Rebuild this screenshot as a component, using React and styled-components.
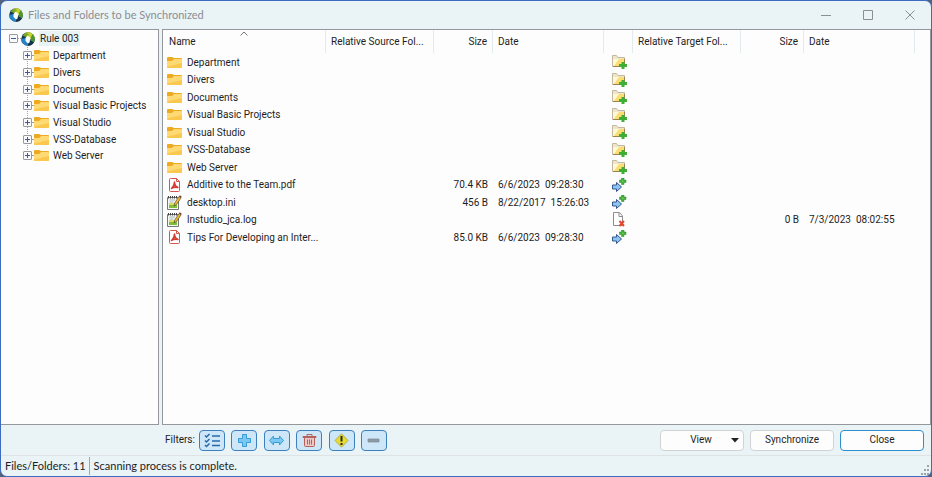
import React from "react";
import styled, { createGlobalStyle } from "styled-components";

const GlobalStyle = createGlobalStyle`
  * { box-sizing: border-box; }
  html, body, #root { height: 100%; margin: 0; }
  body { background: #53617a; color: #1d1d24; font: 10px/16px Roboto, "Liberation Sans", sans-serif; }
  button { font: inherit; color: inherit; margin: 0; padding: 0; }
  ul { list-style: none; margin: 0; padding: 0; }
`;

const Window = styled.div`
  display: flex;
  flex-direction: column;
  min-height: 100%;
  border: 1px solid #3a6cc0;
  border-radius: 7px;
  background: #eaf3f6;
  overflow: hidden;
`;

const TitleBar = styled.header`
  display: flex;
  align-items: center;
  height: 28px;
  padding-left: 8px;
`;

const Title = styled.h1`
  flex: 1;
  margin: 0 0 0 5px;
  color: #8b8e92;
  font: 11px/16px Lato, "Open Sans", sans-serif;
`;

const CaptionButton = styled.button`
  display: grid;
  place-items: center;
  width: 42px;
  height: 26px;
  border: 0;
  background: transparent;
`;

const Panels = styled.main`
  flex: 1;
  display: grid;
  grid-template-columns: 158px 1fr;
  gap: 3px;
`;

const Panel = styled.section`
  min-width: 0;
  border: 1px solid #94989d;
  background: #fdfdfd;
  overflow: hidden;
`;

const TreePanel = styled(Panel)`
  border-left-width: 0;
  padding: 0 0 0 8px;
`;

const TreeRow = styled.div`
  display: flex;
  align-items: center;
  height: 17px;
  white-space: nowrap;
`;

const Expander = styled.button`
  display: grid;
  place-items: center;
  flex: none;
  width: 9px;
  height: 9px;
  border: 1px solid #989ca2;
  border-radius: 1px;
  background: #f9f9fa;
`;

const Stub = styled.span`
  width: 2px;
  border-top: 1px dotted #9b9b9b;
`;

const TreeLabel = styled.span`
  margin-left: 3px;
  padding: 0 1px;
  line-height: 15px;
  background: ${(p) => (p.$selected ? "#e7f3f5" : "transparent")};
`;

const RootRow = styled(TreeRow)`
  ${TreeLabel} { margin-left: 4px; }
  ${Stub} { width: 3px; }
`;

const Branch = styled.ul`
  margin-left: 14px;
  background: linear-gradient(#a4a4a4 50%, transparent 50%) 4px 0 / 1px 2px repeat-y;
  max-height: 110px;

  li:nth-child(3n) ${TreeRow} { height: 16px; }
`;

const Grid = styled.table`
  width: 100%;
  table-layout: fixed;
  border-collapse: separate;
  border-spacing: 0;
  font-size: 10px;

  tbody tr:nth-child(odd) { height: 18px; }
  tbody tr:nth-child(even) { height: 17px; }
`;

const Col = styled.col`
  width: ${(p) => (p.$w ? `${p.$w}px` : "auto")};
`;

const HeadCell = styled.th`
  height: 23px;
  padding: 1px 5px 0;
  border-right: ${(p) => (p.$last ? "0" : "1px solid #e2ecee")};
  font-weight: 400;
  text-align: ${(p) => p.$align || "left"};
  white-space: nowrap;
`;

const SortHead = styled.div`
  position: relative;
  padding-left: 1px;

  svg { position: absolute; left: 50%; top: -3px; margin-left: -4px; }
`;

const Cell = styled.td`
  height: inherit;
  padding: 0 5px;
  line-height: 17px;
  text-align: ${(p) => p.$align || "left"};
  white-space: pre;
`;

const NameCell = styled(Cell)`
  padding: 0 4px;
`;

const FileName = styled.div`
  display: flex;
  align-items: center;
  gap: 5px;
  height: 17px;
`;

const IconCell = styled(Cell)`
  padding: 0 0 0 8px;

  svg { display: block; }
`;

const FilterBar = styled.div`
  display: flex;
  align-items: center;
  justify-content: space-between;
  height: 31px;
  padding: 0 7px 0 164px;
  border-bottom: 1px solid #dfe3e4;
`;

const Filters = styled.div`
  display: flex;
  align-items: center;
  gap: 6px;
`;

const FilterLabel = styled.span`
  width: 28px;
`;

const FilterSet = styled.div`
  display: flex;
  justify-content: space-between;
  width: 188px;
`;

const FilterButton = styled.button`
  display: grid;
  place-items: center;
  width: 26px;
  height: 21px;
  border: 1px solid #3c81bd;
  border-radius: 4px;
  background: #cde6f8;
`;

const Actions = styled.div`
  display: flex;
  gap: 6px;
`;

const ActionButton = styled.button`
  display: flex;
  align-items: center;
  justify-content: center;
  width: 84px;
  height: 21px;
  border: 1px solid ${(p) => (p.$primary ? "#2d8fd0" : "#d0d3d4")};
  border-radius: 4px;
  background: #fdfdfd;
`;

const DropButton = styled(ActionButton)`
  padding: 0 4px 0 10px;

  span { flex: 1; }
`;

const StatusBar = styled.footer`
  display: flex;
  align-items: center;
  height: 20px;
  padding-left: 4px;
  font: 11px/16px Lato, "Open Sans", sans-serif;
`;

const StatusPart = styled.span`
  line-height: 18px;
`;

const StatusMessage = styled(StatusPart)`
  flex: 1;
  margin-left: 3px;
  padding-left: 4px;
  border-left: 1px solid #a2a7a9;
`;

const Grip = styled.svg`
  align-self: flex-end;
  margin: 0 1px 1px 0;
`;

function AppIcon() {
  return (
    <svg width="14" height="14" viewBox="0 0 14 14" aria-hidden="true">
      <circle cx="7" cy="7" r="6.800" fill="#173a50" />
      <path d="M4.500.8A6.800 6.800 0 0 1 13.800 7l-3.800.5L6 4 3 2.500z" fill="#c3d52a" />
      <path d="M1.500 3.500 5 .8l3 1.500-2.500 3z" fill="#7aa82a" />
      <path d="M11.500 2.300a6.800 6.800 0 0 1 1 8.700L9.500 8.500 10 5z" fill="#4d9434" />
      <path d="M.2 7a6.800 6.800 0 0 0 6.800 6.800V10L4.500 6z" fill="#2585c8" />
      <path d="M7 13.800a6.800 6.800 0 0 0 6-3.600L9.500 8.500 7 10z" fill="#15364e" />
      <path d="m6.500 3.500 3 2.500-1 4.500-1.500 1L4.500 9V6z" fill="#fbfdfc" />
    </svg>
  );
}

function FolderIcon() {
  return (
    <svg width="15" height="13" viewBox="0 0 15 13" aria-hidden="true">
      <path d="M0 2q0-1 1-1h4l2 1h7q1 0 1 1v3H0z" fill="#eda91f" />
      <path d="M0 5h5l2-2h7q1 0 1 1v7q0 1-1 1H1q-1 0-1-1z" fill="#ffd974" />
      <path d="M0 10.500 15 7v4q0 1-1 1H1q-1 0-1-1z" fill="#fac84e" />
    </svg>
  );
}

function PdfIcon() {
  return (
    <svg width="15" height="14" viewBox="0 0 15 14" aria-hidden="true">
      <path d="M3.500.5h6l3 3v9q0 1-1 1h-8q-1 0-1-1v-11q0-1 1-1z" fill="#fff" stroke="#d9534b" />
      <path d="M9.500.5v3h3" fill="none" stroke="#d9534b" />
      <path d="M4.500 10.500q3-2.500 3-6.500 0 4 3.500 5.500-4-.8-6.500 1z" fill="#e8827b" stroke="#d5382f" strokeWidth="1.500" strokeLinejoin="round" />
    </svg>
  );
}

function NoteIcon() {
  return (
    <svg width="15" height="15" viewBox="0 0 15 15" aria-hidden="true">
      <path d="M.5 2.500h11v12H.5z" fill="#f6f8f6" stroke="#71777a" />
      <path d="M2 9.500h8V13H2z" fill="#7fbe36" />
      <path d="M2 8h7v2H2z" fill="#d6df5c" />
      <path d="M2.500 5h5.500M2.500 7h4" stroke="#a8b5bb" />
      <path d="M1.500 1v2.500M3.500 1v2.500M5.500 1v2.500M7.500 1v2.500M9.500 1v2.500" stroke="#444" />
      <path d="m7 11 .7-3L12 1.500l2 1.500-4.500 6.500z" fill="#f3b92e" stroke="#3c3a31" strokeWidth=".6" />
      <path d="m12 1.500.8-1.200 2 1.500L14 3z" fill="#7d3c35" />
    </svg>
  );
}

function FolderAddIcon() {
  return (
    <svg width="15" height="14" viewBox="0 0 15 14" aria-hidden="true">
      <path d="M.5 2V.5h4l1.500 2h6.500v9H.5z" fill="#eee6cc" stroke="#c3b89d" />
      <path d="M2 4h10v7H1z" fill="#f9df72" />
      <path d="M1 4h6l-5 7H1z" fill="#fff7d5" />
      <path d="M1 11.500h9M12.500 4v5" stroke="#9c8253" />
      <path d="M9.500 7h3v2H15v3h-2.500v2h-3v-2H7V9h2.500z" fill="#3fae35" />
    </svg>
  );
}

function CopyIcon() {
  return (
    <svg width="15" height="14" viewBox="0 0 15 14" aria-hidden="true">
      <path d="M.5 7h4V4.500L9.500 9l-5 4.500V11h-4z" fill="#8cc5f0" stroke="#34578f" strokeLinejoin="round" />
      <path d="M9.500 0h2.500v2h2v2.500h-2v2H9.500v-2h-2V2h2z" fill="#44b23a" stroke="#268b2d" strokeWidth=".5" />
      <path d="M10 3.300h1.500" stroke="#82d470" />
    </svg>
  );
}

function DeleteFileIcon() {
  return (
    <svg width="15" height="15" viewBox="0 0 15 15" aria-hidden="true">
      <path d="M1.500.5h6l3 3.500v9.500h-9z" fill="#fff" stroke="#8c8c8c" />
      <path d="M7 1v3.500h3.500" fill="none" stroke="#8c8c8c" />
      <path d="m7.500 9 4.500 5m0-5-4.500 5" stroke="#e04630" strokeWidth="2" />
    </svg>
  );
}

const MARKS = {
  folder: FolderAddIcon,
  copy: CopyIcon,
  remove: DeleteFileIcon,
};
const KINDS = { folder: FolderIcon, pdf: PdfIcon, note: NoteIcon };

const FOLDERS = ["Department", "Divers", "Documents", "Visual Basic Projects", "Visual Studio", "VSS-Database", "Web Server"];
const ROWS = [
  ...FOLDERS.map((name) => ({ name, kind: "folder", mark: "folder" })),
  { name: "Additive to the Team.pdf", kind: "pdf", size: "70.4 KB", date: "6/6/2023  09:28:30", mark: "copy" },
  { name: "desktop.ini", kind: "note", size: "456 B", date: "8/22/2017  15:26:03", mark: "copy" },
  { name: "lnstudio_jca.log", kind: "note", mark: "remove", targetSize: "0 B", targetDate: "7/3/2023  08:02:55" },
  { name: "Tips For Developing an Inter...", kind: "pdf", size: "85.0 KB", date: "6/6/2023  09:28:30", mark: "copy" },
];
const COLUMNS = [163, 108, 59, 111, 29, 108, 63, 111, null];

const FILTERS = [
  {
    label: "Show all",
    art: (
      <path
        d="m1 2.500 1.500 1.500 3-3M1 7.500 2.500 9l3-3M1 12l1.500 1.500 3-3M8 3h8M8 8h8M8 12.500h8"
        fill="none"
        stroke="#2869aa"
        strokeWidth="1.500"
      />
    ),
  },
  {
    label: "New items",
    art: <path d="M6.500 1.500h4v4h4v4h-4v4h-4v-4h-4v-4h4z" fill="#7ac8f2" stroke="#379cd5" strokeLinejoin="round" />,
  },
  {
    label: "Changed items",
    art: <path d="m1.500 7.500 4-4.500v2.500h6V3l4 4.500-4 4.500V9.500h-6V12z" fill="#7ac8f2" stroke="#379cd5" strokeLinejoin="round" />,
  },
  {
    label: "Deleted items",
    art: (
      <g fill="none" stroke="#b5625c">
        <path d="M3.500 5v7.500q0 1 1 1h8q1 0 1-1V5" fill="#edc8c4" />
        <path d="M2 3.500h13v1H2zM6 3V1.500h5V3M6.500 6.500v5M8.500 6.500v5M10.500 6.500v5" />
      </g>
    ),
  },
  {
    label: "Conflicts",
    art: (
      <g>
        <path d="m8.500.8 6.500 6.700-6.500 6.700L2 7.500z" fill="#e6dc32" stroke="#b9ad3c" />
        <path d="M8.500 3v5.500M8.500 10v2" stroke="#26281f" strokeWidth="2" />
      </g>
    ),
  },
  { label: "Unchanged items", art: <path d="M3 6h11v3H3z" fill="#8e9aa5" stroke="#7b8995" strokeWidth=".7" /> },
];

function Toggle({ open = false, label }) {
  return (
    <Expander aria-label={label} aria-expanded={open}>
      <svg width="7" height="7" viewBox="0 0 7 7" aria-hidden="true">
        <path d={open ? "M1 3.500h5" : "M1 3.500h5M3.500 1v5"} stroke="#42589a" />
      </svg>
    </Expander>
  );
}

function FolderTree() {
  return (
    <TreePanel aria-label="Rules">
      <ul>
        <li>
          <RootRow>
            <Toggle open label="Collapse Rule 003" />
            <Stub />
            <AppIcon />
            <TreeLabel $selected>Rule 003</TreeLabel>
          </RootRow>
          <Branch>
            {FOLDERS.map((name) => (
              <li key={name}>
                <TreeRow>
                  <Toggle label={`Expand ${name}`} />
                  <Stub />
                  <FolderIcon />
                  <TreeLabel>{name}</TreeLabel>
                </TreeRow>
              </li>
            ))}
          </Branch>
        </li>
      </ul>
    </TreePanel>
  );
}

function FileTable() {
  return (
    <Panel aria-label="Files">
      <Grid>
        <colgroup>
          {COLUMNS.map((w, i) => (
            <Col key={i} $w={w} />
          ))}
        </colgroup>
        <thead>
          <tr>
            <HeadCell aria-sort="ascending">
              <SortHead>
                Name
                <svg width="8" height="5" viewBox="0 0 8 5" aria-hidden="true">
                  <path d="m.5 4.500 3.500-3.500 3.500 3.500" fill="none" stroke="#70777a" />
                </svg>
              </SortHead>
            </HeadCell>
            <HeadCell>Relative Source Fol...</HeadCell>
            <HeadCell $align="right">Size</HeadCell>
            <HeadCell>Date</HeadCell>
            <HeadCell aria-label="Action" />
            <HeadCell>Relative Target Fol...</HeadCell>
            <HeadCell $align="right">Size</HeadCell>
            <HeadCell>Date</HeadCell>
            <HeadCell $last />
          </tr>
        </thead>
        <tbody>
          {ROWS.map((row) => {
            const Kind = KINDS[row.kind];
            const Mark = MARKS[row.mark];
            return (
              <tr key={row.name}>
                <NameCell>
                  <FileName>
                    <Kind />
                    {row.name}
                  </FileName>
                </NameCell>
                <Cell />
                <Cell $align="right">{row.size}</Cell>
                <Cell>{row.date}</Cell>
                <IconCell>
                  <Mark />
                </IconCell>
                <Cell />
                <Cell $align="right">{row.targetSize}</Cell>
                <Cell>{row.targetDate}</Cell>
                <Cell />
              </tr>
            );
          })}
        </tbody>
      </Grid>
    </Panel>
  );
}

export default function App() {
  return (
    <>
      <GlobalStyle />
      <Window>
        <TitleBar>
          <AppIcon />
          <Title>Files and Folders to be Synchronized</Title>
          {[
            ["Minimize", "M0 5.500h10"],
            ["Maximize", "M.5.5h9v9h-9z"],
            ["Close window", "m.5.5 9 9m0-9-9 9"],
          ].map(([label, d]) => (
            <CaptionButton key={label} aria-label={label}>
              <svg width="10" height="10" viewBox="0 0 10 10" aria-hidden="true">
                <path d={d} fill="none" stroke="#8c8f91" />
              </svg>
            </CaptionButton>
          ))}
        </TitleBar>
        <Panels>
          <FolderTree />
          <FileTable />
        </Panels>
        <FilterBar>
          <Filters role="group" aria-label="Filters">
            <FilterLabel>Filters:</FilterLabel>
            <FilterSet>
              {FILTERS.map(({ label, art }) => (
                <FilterButton key={label} aria-label={label} aria-pressed="true">
                  <svg width="17" height="15" viewBox="0 0 17 15" aria-hidden="true">
                    {art}
                  </svg>
                </FilterButton>
              ))}
            </FilterSet>
          </Filters>
          <Actions>
            <DropButton aria-haspopup="menu">
              <span>View</span>
              <svg width="8" height="5" viewBox="0 0 8 5" aria-hidden="true">
                <path d="M0 0h8L4 4.500z" fill="#222" />
              </svg>
            </DropButton>
            <ActionButton>Synchronize</ActionButton>
            <ActionButton $primary>Close</ActionButton>
          </Actions>
        </FilterBar>
        <StatusBar>
          <StatusPart>Files/Folders: 11</StatusPart>
          <StatusMessage>Scanning process is complete.</StatusMessage>
          <Grip width="10" height="10" viewBox="0 0 10 10" aria-hidden="true">
            <path d="M7 0h2v2H7zM4 4h2v2H4zM7 4h2v2H7zM1 8h2v2H1zM4 8h2v2H4zM7 8h2v2H7z" fill="#9da2a3" />
          </Grip>
        </StatusBar>
      </Window>
    </>
  );
}
